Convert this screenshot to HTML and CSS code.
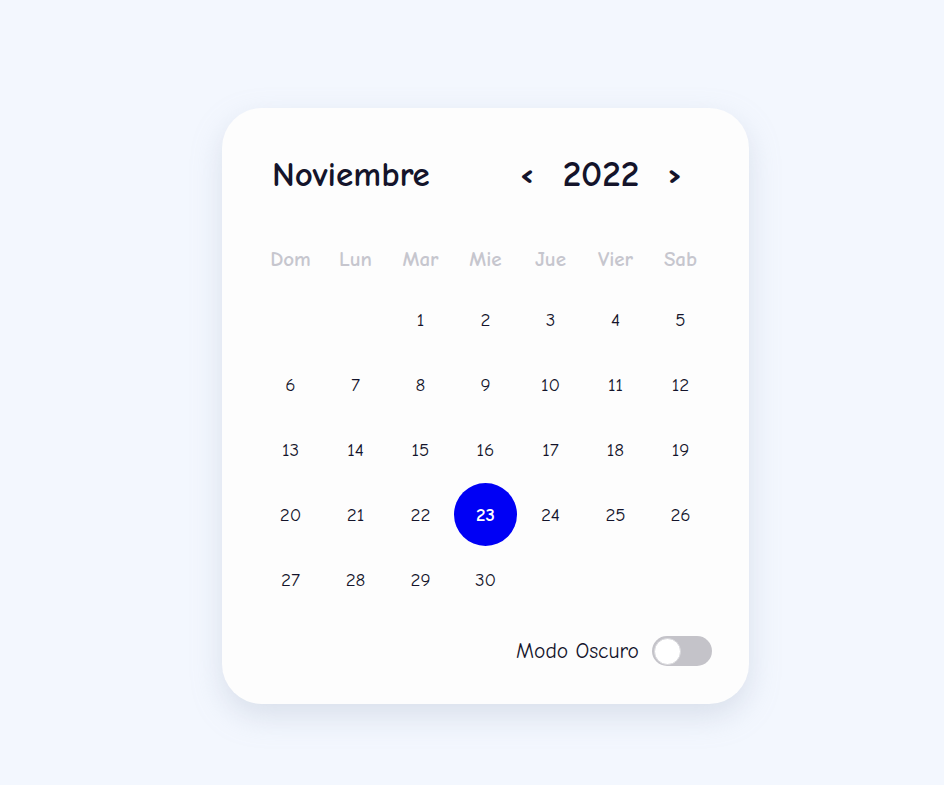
FILE: index.html
```html
<!DOCTYPE html>
<html lang="es">
<head>
<meta charset="utf-8">
<title>Calendario</title>
<link rel="stylesheet" href="styles.css">
</head>
<body>
<div class="page">
  <div class="card">
    <div class="header">
      <div class="month">Noviembre</div>
      <div class="year-nav">
        <span class="arrow">&lsaquo;</span>
        <span class="year">2022</span>
        <span class="arrow">&rsaquo;</span>
      </div>
    </div>
    <div class="weekdays">
      <div>Dom</div><div>Lun</div><div>Mar</div><div>Mie</div><div>Jue</div><div>Vier</div><div>Sab</div>
    </div>
    <div class="days">
      <div class="day"></div><div class="day"></div>
      <div class="day"><span>1</span></div><div class="day"><span>2</span></div><div class="day"><span>3</span></div><div class="day"><span>4</span></div><div class="day"><span>5</span></div>
      <div class="day"><span>6</span></div><div class="day"><span>7</span></div><div class="day"><span>8</span></div><div class="day"><span>9</span></div><div class="day"><span>10</span></div><div class="day"><span>11</span></div><div class="day"><span>12</span></div>
      <div class="day"><span>13</span></div><div class="day"><span>14</span></div><div class="day"><span>15</span></div><div class="day"><span>16</span></div><div class="day"><span>17</span></div><div class="day"><span>18</span></div><div class="day"><span>19</span></div>
      <div class="day"><span>20</span></div><div class="day"><span>21</span></div><div class="day"><span>22</span></div><div class="day"><span class="today">23</span></div><div class="day"><span>24</span></div><div class="day"><span>25</span></div><div class="day"><span>26</span></div>
      <div class="day"><span>27</span></div><div class="day"><span>28</span></div><div class="day"><span>29</span></div><div class="day"><span>30</span></div>
    </div>
    <div class="footer">
      <span class="mode-label">Modo Oscuro</span>
      <span class="toggle"><span class="knob"></span></span>
    </div>
  </div>
</div>
</body>
</html>
```

FILE: styles.css
```css
* { box-sizing: border-box; }
html, body {
  margin: 0;
  padding: 0;
  background: #f3f7fe;
  font-family: "Comic Sans MS", "Comic Neue", "Lato", sans-serif;
  color: #14142b;
}
.page {
  width: 944px;
  height: 785px;
  display: flex;
  justify-content: center;
  padding-top: 108px;
}
.card {
  width: 527px;
  height: 596px;
  margin-left: 27px;
  background: #fdfdfd;
  border-radius: 40px;
  box-shadow: 0 12px 30px rgba(170, 180, 200, 0.35);
  padding: 40px 36px 0 36px;
  display: flex;
  flex-direction: column;
}
.header {
  height: 52px;
  display: flex;
  align-items: center;
  justify-content: space-between;
  padding: 0 32px 0 14px;
}
.month {
  font-size: 35px;
  font-weight: bold;
}
.year-nav {
  display: flex;
  align-items: center;
  gap: 30px;
}
.year {
  font-size: 37px;
  font-weight: bold;
}
.arrow {
  font-size: 34px;
  font-weight: bold;
  line-height: 1;
  transform: scaleX(1.15);
}
.weekdays {
  margin-top: 39px;
  height: 40px;
  display: grid;
  grid-template-columns: repeat(7, 65px);
  align-items: center;
  justify-items: center;
  font-size: 21px;
  font-weight: bold;
  color: #c6c6ce;
}
.days {
  margin-top: 8px;
  display: grid;
  grid-template-columns: repeat(7, 65px);
  grid-auto-rows: 65px;
}
.day {
  display: flex;
  align-items: center;
  justify-content: center;
  font-size: 19px;
}
.day span {
  width: 63px;
  height: 63px;
  display: flex;
  align-items: center;
  justify-content: center;
  border-radius: 50%;
}
.day .today {
  background: #0000f5;
  color: #ffffff;
  font-weight: bold;
}
.footer {
  margin-top: 24px;
  display: flex;
  justify-content: flex-end;
  align-items: center;
  gap: 13px;
  padding-right: 1px;
}
.mode-label {
  font-size: 21.5px;
}
.toggle {
  width: 60px;
  height: 30px;
  border-radius: 15px;
  background: #c4c3c9;
  display: flex;
  align-items: center;
  padding-left: 2px;
}
.knob {
  width: 27px;
  height: 27px;
  border-radius: 50%;
  background: #ffffff;
  border: 1px solid #d8d8dc;
}
```
